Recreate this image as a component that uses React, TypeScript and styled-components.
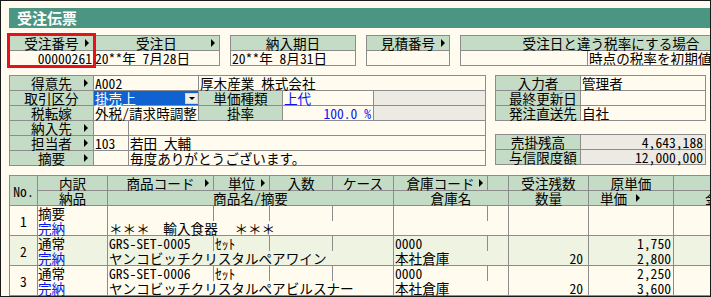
import { FC } from 'react';
import styled, { createGlobalStyle, css } from 'styled-components';

const LINE = '#8c8c8c';
const CREAM = '#fffbee';
const GREEN = '#c4dcc6';
const GRAY = '#eceae2';
const ALT = '#eef3e2';
const BLUE = '#0a14f0';

const GlobalStyle = createGlobalStyle`
  html, body {
    margin: 0;
    padding: 0;
    background: #ffffff;
  }
  body {
    font-family: "Noto Sans CJK JP", "Noto Sans", sans-serif;
  }
`;

const Frame = styled.div`
  width: 711px;
  height: 297px;
  box-sizing: border-box;
  border: 1px solid #1a1a1a;
  background: ${CREAM};
  padding: 7px 0 0 8px;
  overflow: hidden;
  display: flex;
  flex-direction: column;
  font-size: 13.6px;
  line-height: 14px;
  color: #000;
  font-feature-settings: 'hwid' 1;
`;

const TitleBar = styled.div`
  flex-shrink: 0;
  height: 20px;
  padding-left: 8px;
  background: #4b9583;
  color: #ffffff;
  font-size: 15px;
  font-weight: 700;
  line-height: 20px;
`;

const HeaderRow = styled.div`
  flex-shrink: 0;
  display: flex;
  gap: 10px;
  margin-top: 7px;
`;

const FieldGroup = styled.div`
  flex-shrink: 0;
  display: flex;
  gap: 1px;
  padding: 1px;
  background: ${LINE};
`;

const Field = styled.div<{ $w: number; $marked?: boolean }>`
  width: ${({ $w }) => $w}px;
  display: grid;
  grid-template-rows: 14px 14px;
  row-gap: 1px;
  ${({ $marked }) =>
    $marked &&
    css`
      position: relative;
      z-index: 1;
      outline: 3px solid #e8101a;
    `}
`;

const FieldValues = styled.div`
  display: flex;
  gap: 1px;
`;

const FieldValue = styled.div<{ $w?: number; $align?: 'left' | 'right' }>`
  ${({ $w }) => ($w ? `width: ${$w}px;` : 'flex: 1;')}
  padding: 0 1px;
  background: ${CREAM};
  text-align: ${({ $align }) => $align ?? 'left'};
  white-space: nowrap;
  overflow: hidden;
`;

const Green = styled.div`
  background: ${GREEN};
  white-space: nowrap;
`;

const Caption = styled.div<{ $inline?: boolean }>`
  height: 100%;
  display: grid;
  grid-template-columns: 12px 1fr 12px;
  align-items: center;
  & > span {
    grid-column: 2;
    text-align: center;
  }
  ${({ $inline }) =>
    $inline &&
    css`
      display: flex;
      justify-content: center;
      gap: 9px;
      padding-right: 22px;
    `}
`;

const Arrow = styled.i`
  justify-self: center;
  width: 0;
  height: 0;
  border-left: 4px solid #000;
  border-top: 4px solid transparent;
  border-bottom: 4px solid transparent;
`;

const Captioned: FC<{ text: string; arrow?: boolean; inline?: boolean }> = ({ text, arrow, inline }) => (
  <Caption $inline={inline}>
    <span>{text}</span>
    {arrow && <Arrow />}
  </Caption>
);

const Section = styled.div`
  flex-shrink: 0;
  display: flex;
  gap: 9px;
  margin-top: 9px;
`;

const InfoGrid = styled.div<{ $cols: string; $rows: number }>`
  flex-shrink: 0;
  align-self: flex-start;
  display: grid;
  grid-template-columns: ${({ $cols }) => $cols};
  grid-template-rows: repeat(${({ $rows }) => $rows}, 14px);
  gap: 1px;
  padding: 1px;
  background: ${LINE};
`;

const InfoCell = styled.div<{
  $tone?: 'label' | 'value' | 'gray';
  $span?: number;
  $align?: 'left' | 'right';
  $blue?: boolean;
}>`
  grid-column: span ${({ $span }) => $span ?? 1};
  background: ${({ $tone }) => ($tone === 'label' ? GREEN : $tone === 'gray' ? GRAY : CREAM)};
  color: ${({ $blue }) => ($blue ? BLUE : '#000')};
  text-align: ${({ $align }) => $align ?? 'left'};
  padding: 0 ${({ $align }) => ($align === 'right' ? 2 : 1)}px;
  white-space: nowrap;
`;

const RightPanel = styled.div`
  display: flex;
  flex-direction: column;
  gap: 13px;
`;

const Select = styled.div`
  grid-column: span 2;
  display: flex;
  align-items: center;
  justify-content: space-between;
  padding-left: 1px;
  background: #0f62d0;
  color: #ffffff;
`;

const SelectButton = styled.span`
  width: 13px;
  height: 11px;
  box-sizing: border-box;
  display: flex;
  align-items: flex-end;
  justify-content: center;
  padding-bottom: 3px;
  background: #efeee9;
  border: 1px solid #d6d4cc;
  &::after {
    content: '';
    border-top: 3px solid #000;
    border-left: 3px solid transparent;
    border-right: 3px solid transparent;
  }
`;

const Table = styled.div`
  flex-shrink: 0;
  align-self: flex-start;
  width: max-content;
  margin-top: 9px;
  display: grid;
  grid-template-columns: 28px 70px 106px 56px 63px 61px 94px 21px 80px 85px 90px;
  grid-auto-rows: 15px;
  border-top: 1px solid ${LINE};
  border-left: 1px solid ${LINE};
`;

const Cell = styled.div<{
  $head?: boolean;
  $alt?: boolean;
  $open?: boolean;
  $span?: number;
  $rows?: number;
  $align?: 'left' | 'right' | 'center';
  $blue?: boolean;
  $pad?: number;
  $full?: boolean;
}>`
  box-sizing: border-box;
  grid-column: span ${({ $span }) => $span ?? 1};
  grid-row: span ${({ $rows }) => $rows ?? 1};
  border-right: 1px solid ${LINE};
  border-bottom: ${({ $open }) => ($open ? 'none' : `1px solid ${LINE}`)};
  background: ${({ $head, $alt }) => ($head ? GREEN : $alt ? ALT : CREAM)};
  color: ${({ $blue }) => ($blue ? BLUE : '#000')};
  text-align: ${({ $align }) => $align ?? 'left'};
  padding: 0 ${({ $pad }) => $pad ?? 1}px;
  white-space: nowrap;
  ${({ $full }) => $full && 'font-feature-settings: normal;'}
  ${({ $rows }) =>
    ($rows ?? 1) > 1 &&
    css`
      display: flex;
      align-items: center;
      justify-content: center;
    `}
`;

interface ILine {
  no: string;
  kind: string;
  code: string;
  unit: string;
  name: string;
  wh: string;
  whName: string;
  qty: string;
  cost: string;
  price: string;
  alt?: boolean;
}

const lines: ILine[] = [
  { no: '1', kind: '摘要', code: '', unit: '', name: '＊＊＊　輸入食器　 ＊＊＊', wh: '', whName: '', qty: '', cost: '', price: '' },
  {
    no: '2',
    kind: '通常',
    code: 'GRS-SET-0005',
    unit: 'ｾｯﾄ',
    name: 'ヤンコビッチクリスタルペアワイン',
    wh: '0000',
    whName: '本社倉庫',
    qty: '20',
    cost: '1,750',
    price: '2,800',
    alt: true,
  },
  {
    no: '3',
    kind: '通常',
    code: 'GRS-SET-0006',
    unit: 'ｾｯﾄ',
    name: 'ヤンコビッチクリスタルペアビルスナー',
    wh: '0000',
    whName: '本社倉庫',
    qty: '20',
    cost: '2,250',
    price: '3,600',
  },
];

const LineRow: FC<{ line: ILine }> = ({ line }) => {
  const a = line.alt;
  return (
    <>
      <Cell $alt={a} $rows={2}>{line.no}</Cell>
      <Cell $alt={a} $open $pad={0}>{line.kind}</Cell>
      <Cell $alt={a} $open>{line.code}</Cell>
      <Cell $alt={a} $open>{line.unit}</Cell>
      <Cell $alt={a} $open />
      <Cell $alt={a} $open />
      <Cell $alt={a} $open>{line.wh}</Cell>
      <Cell $alt={a} $open />
      <Cell $alt={a} $open />
      <Cell $alt={a} $open $align="right" $pad={2}>{line.cost}</Cell>
      <Cell $alt={a} $open />
      <Cell $alt={a} $blue $pad={0}>完納</Cell>
      <Cell $alt={a} $span={4} $full>{line.name}</Cell>
      <Cell $alt={a} $span={2}>{line.whName}</Cell>
      <Cell $alt={a} $align="right" $pad={5}>{line.qty}</Cell>
      <Cell $alt={a} $align="right" $pad={2}>{line.price}</Cell>
      <Cell $alt={a} />
    </>
  );
};

const App: FC = () => (
  <>
    <GlobalStyle />
    <Frame>
      <TitleBar>受注伝票</TitleBar>

      <HeaderRow>
        <FieldGroup>
          <Field $w={83} $marked>
            <Green><Captioned text="受注番号" arrow /></Green>
            <FieldValue $align="right">00000261</FieldValue>
          </Field>
          <Field $w={125}>
            <Green><Captioned text="受注日" arrow /></Green>
            <FieldValue>20**年 7月28日</FieldValue>
          </Field>
        </FieldGroup>
        <FieldGroup>
          <Field $w={124}>
            <Green><Captioned text="納入期日" /></Green>
            <FieldValue>20**年 8月31日</FieldValue>
          </Field>
        </FieldGroup>
        <FieldGroup>
          <Field $w={82}>
            <Green><Captioned text="見積番号" arrow /></Green>
            <FieldValue />
          </Field>
        </FieldGroup>
        <FieldGroup>
          <Field $w={300}>
            <Green><Captioned text="受注日と違う税率にする場合" /></Green>
            <FieldValues>
              <FieldValue $w={124} />
              <FieldValue>時点の税率を初期値とする</FieldValue>
            </FieldValues>
          </Field>
        </FieldGroup>
      </HeaderRow>

      <Section>
        <InfoGrid $cols="83px 34px 69px 83px 90px 111px" $rows={6}>
          <InfoCell $tone="label"><Captioned text="得意先" arrow /></InfoCell>
          <InfoCell $span={2}>A002</InfoCell>
          <InfoCell $span={3}>厚木産業　株式会社</InfoCell>

          <InfoCell $tone="label"><Captioned text="取引区分" /></InfoCell>
          <Select>
            掛売上
            <SelectButton />
          </Select>
          <InfoCell $tone="label"><Captioned text="単価種類" /></InfoCell>
          <InfoCell $blue>上代</InfoCell>
          <InfoCell $tone="gray" />

          <InfoCell $tone="label"><Captioned text="税転嫁" /></InfoCell>
          <InfoCell $span={2}>外税/請求時調整</InfoCell>
          <InfoCell $tone="label"><Captioned text="掛率" /></InfoCell>
          <InfoCell $blue $align="right">100.0 %</InfoCell>
          <InfoCell $tone="gray" />

          <InfoCell $tone="label"><Captioned text="納入先" arrow /></InfoCell>
          <InfoCell />
          <InfoCell $span={4} />

          <InfoCell $tone="label"><Captioned text="担当者" arrow /></InfoCell>
          <InfoCell>103</InfoCell>
          <InfoCell $span={4}>若田 大輔</InfoCell>

          <InfoCell $tone="label"><Captioned text="摘要" arrow /></InfoCell>
          <InfoCell />
          <InfoCell $span={4}>毎度ありがとうございます。</InfoCell>
        </InfoGrid>

        <RightPanel>
          <InfoGrid $cols="84px 124px" $rows={3}>
            <InfoCell $tone="label"><Captioned text="入力者" /></InfoCell>
            <InfoCell>管理者</InfoCell>
            <InfoCell $tone="label"><Captioned text="最終更新日" /></InfoCell>
            <InfoCell />
            <InfoCell $tone="label"><Captioned text="発注直送先" /></InfoCell>
            <InfoCell>自社</InfoCell>
          </InfoGrid>
          <InfoGrid $cols="84px 124px" $rows={2}>
            <InfoCell $tone="label"><Captioned text="売掛残高" /></InfoCell>
            <InfoCell $tone="gray" $align="right">4,643,188</InfoCell>
            <InfoCell $tone="label"><Captioned text="与信限度額" /></InfoCell>
            <InfoCell $tone="gray" $align="right">12,000,000</InfoCell>
          </InfoGrid>
        </RightPanel>
      </Section>

      <Table>
        <Cell $head $rows={2}>No.</Cell>
        <Cell $head $align="center">内訳</Cell>
        <Cell $head $pad={0}><Captioned text="商品コード" arrow /></Cell>
        <Cell $head $pad={0}><Captioned text="単位" arrow /></Cell>
        <Cell $head $align="center">入数</Cell>
        <Cell $head $align="center">ケース</Cell>
        <Cell $head $pad={0}><Captioned text="倉庫コード" arrow /></Cell>
        <Cell $head />
        <Cell $head $align="center">受注残数</Cell>
        <Cell $head $align="center">原単価</Cell>
        <Cell $head />

        <Cell $head $align="center">納品</Cell>
        <Cell $head $span={4} $align="center">商品名/摘要</Cell>
        <Cell $head $span={2} $align="center">倉庫名</Cell>
        <Cell $head $align="center">数量</Cell>
        <Cell $head $pad={0}><Captioned text="単価" arrow inline /></Cell>
        <Cell $head $align="center">金額</Cell>

        {lines.map((line) => (
          <LineRow key={line.no} line={line} />
        ))}
      </Table>
    </Frame>
  </>
);

export default App;
